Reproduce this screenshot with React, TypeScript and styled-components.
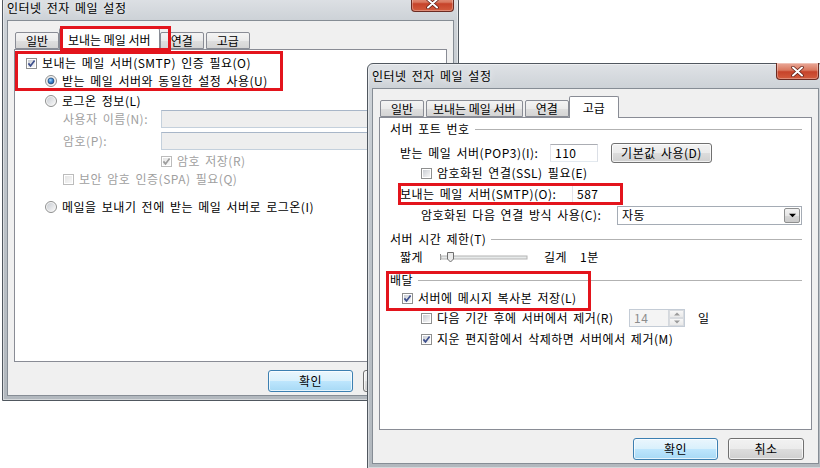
import React, { useId } from "react";
import styled, { createGlobalStyle } from "styled-components";

const GlobalStyle = createGlobalStyle`
  html, body {
    margin: 0;
    padding: 0;
    background: #ffffff;
  }
  body {
    font-family: "Noto Sans CJK KR", "Noto Sans", "Liberation Sans", sans-serif;
    font-size: 12px;
    line-height: 14px;
    letter-spacing: 0.5px;
    word-spacing: 2px;
    color: #000000;
  }
`;

const Desktop = styled.div`
  position: relative;
  width: 820px;
  height: 468px;
  overflow: hidden;
  background: #ffffff;
`;

interface FrameProps {
  $x: number;
  $y: number;
}

const Frame = styled.div<FrameProps>`
  position: absolute;
  left: ${(p) => p.$x}px;
  top: ${(p) => p.$y}px;
  width: 457px;
  height: 406px;
  box-sizing: border-box;
  display: flex;
  flex-direction: column;
  padding: 0 4px 4px;
  border: 1px solid #50575f;
  border-radius: 6px 6px 0 0;
  background: linear-gradient(180deg, #dfe2e6 0px, #cdd2d7 24px, #c0c6cc 140px, #b2b8be 100%);
  box-shadow: inset 0 0 0 1px rgba(255, 255, 255, 0.45);
`;

const TitleBar = styled.div`
  height: 24px;
  display: flex;
  align-items: flex-start;
`;

const Title = styled.span`
  margin-top: 5px;
  text-shadow: 0 0 6px rgba(255, 255, 255, 0.9);
`;

const CloseButton = styled.div`
  margin-left: auto;
  margin-top: -1px;
  width: 43px;
  height: 17px;
  box-sizing: border-box;
  display: flex;
  align-items: center;
  justify-content: center;
  border: 1px solid #6b2b22;
  border-top: none;
  border-radius: 0 0 4px 4px;
  background: linear-gradient(180deg, #eaa999 0%, #d9785f 45%, #c6432a 55%, #d35c3e 100%);
  box-shadow: inset 0 0 0 1px rgba(255, 255, 255, 0.3);
`;

const Client = styled.div`
  flex: 1;
  display: flex;
  flex-direction: column;
  padding: 0 6px;
  background: #f0f0f0;
  border: 1px solid #868d95;
`;

const TabStrip = styled.div`
  position: relative;
  z-index: 1;
  height: 28px;
  display: flex;
  align-items: flex-end;
  padding-left: 1px;
  letter-spacing: 0;
  word-spacing: 0;
`;

const Tab = styled.div<{ $active?: boolean }>`
  position: relative;
  height: ${(p) => (p.$active ? 22 : 17)}px;
  min-width: ${(p) => (p.$active ? 50 : 44)}px;
  margin: 0 ${(p) => (p.$active ? 0 : 2)}px ${(p) => (p.$active ? -1 : 0)}px
    ${(p) => (p.$active ? -2 : 0)}px;
  padding: 0 ${(p) => (p.$active ? 8 : 6)}px;
  box-sizing: border-box;
  display: flex;
  align-items: center;
  justify-content: center;
  white-space: nowrap;
  border: 1px solid #898c95;
  border-bottom: ${(p) => (p.$active ? "none" : "1px solid #898c95")};
  border-radius: 2px 2px 0 0;
  background: ${(p) =>
    p.$active
      ? "#ffffff"
      : "linear-gradient(180deg, #f4f4f4 0%, #ebebeb 50%, #dfdfdf 51%, #d4d4d4 100%)"};
`;

const Panel = styled.div`
  height: 313px;
  box-sizing: border-box;
  border: 1px solid #898c95;
  background: #ffffff;
  display: flex;
  flex-direction: column;
`;

const ButtonRow = styled.div`
  display: flex;
  justify-content: flex-end;
  gap: 10px;
  margin: 8px 8px 0 0;
`;

const PushButton = styled.div<{ $w: number; $h?: number; $primary?: boolean }>`
  width: ${(p) => p.$w}px;
  height: ${(p) => p.$h ?? 22}px;
  flex: none;
  box-sizing: border-box;
  display: flex;
  align-items: center;
  justify-content: center;
  white-space: nowrap;
  border: 1px solid ${(p) => (p.$primary ? "#3c7fb1" : "#707070")};
  border-radius: 3px;
  background: ${(p) =>
    p.$primary
      ? "linear-gradient(180deg, #eaf6fd 0%, #d9f0fc 49%, #bee6fd 50%, #a7d9f5 100%)"
      : "linear-gradient(180deg, #f2f2f2 0%, #ebebeb 49%, #dddddd 50%, #cfcfcf 100%)"};
  box-shadow: inset 0 0 0 1px rgba(255, 255, 255, 0.7);
`;

const Row = styled.div<{ $mt?: number; $indent?: number }>`
  display: flex;
  align-items: center;
  height: 18px;
  margin-top: ${(p) => p.$mt ?? 0}px;
  padding-left: ${(p) => p.$indent ?? 0}px;
  padding-right: 9px;
  white-space: nowrap;
`;

const Label = styled.span<{ $w?: number; $muted?: boolean; $ml?: number }>`
  flex: none;
  width: ${(p) => (p.$w ? `${p.$w}px` : "auto")};
  margin-left: ${(p) => p.$ml ?? 0}px;
  color: ${(p) => (p.$muted ? "#a0a0a0" : "#000000")};
`;

const GroupLine = styled.div`
  flex: 1;
  height: 0;
  margin-left: 5px;
  border-top: 1px solid #b2b2b2;
`;

const Field = styled.div<{ $w?: number; $disabled?: boolean; $ml?: number }>`
  flex: ${(p) => (p.$w ? "none" : "1")};
  width: ${(p) => (p.$w ? `${p.$w}px` : "auto")};
  margin-left: ${(p) => p.$ml ?? 0}px;
  height: 18px;
  box-sizing: border-box;
  display: flex;
  align-items: center;
  padding: 0 4px;
  border: 1px solid;
  border-color: ${(p) =>
    p.$disabled ? "#a8b6c8 #c4d0dc #c4d0dc #c4d0dc" : "#abadb3 #dbdfe6 #e3e9ef #e2e3ea"};
  background: ${(p) => (p.$disabled ? "#eeeeee" : "#ffffff")};
  color: ${(p) => (p.$disabled ? "#8c8c8c" : "#000000")};
`;

const Select = styled.div`
  flex: 1;
  height: 19px;
  box-sizing: border-box;
  display: flex;
  align-items: center;
  justify-content: space-between;
  padding: 0 1px 0 4px;
  border: 1px solid #a5acb5;
  background: #ffffff;
`;

const DropArrow = styled.div`
  width: 16px;
  height: 15px;
  box-sizing: border-box;
  display: flex;
  align-items: center;
  justify-content: center;
  border: 1px solid #8e8f8f;
  border-radius: 2px;
  background: linear-gradient(180deg, #f2f2f2 0%, #e6e6e6 50%, #d6d6d6 51%, #cacaca 100%);
`;

const Spinner = styled.div`
  width: 56px;
  height: 18px;
  box-sizing: border-box;
  display: flex;
  align-items: stretch;
  border: 1px solid #c4ccd6;
  background: #f4f4f4;
  color: #8c8c8c;
`;

const SpinText = styled.span`
  flex: 1;
  display: flex;
  align-items: center;
  padding-left: 4px;
`;

const SpinButtons = styled.div`
  width: 15px;
  display: flex;
  flex-direction: column;
  border-left: 1px solid #d4d8dd;
`;

const SpinHalf = styled.div`
  flex: 1;
  display: flex;
  align-items: center;
  justify-content: center;
  background: linear-gradient(180deg, #f7f7f7, #e9e9e9);
  border: 1px solid #d8dbdf;
`;

const Choice = styled.label<{ $w?: number; $muted?: boolean }>`
  flex: none;
  display: flex;
  align-items: center;
  gap: 5px;
  width: ${(p) => (p.$w ? `${p.$w}px` : "auto")};
  color: ${(p) => (p.$muted ? "#a0a0a0" : "#000000")};
`;

const Ring = styled.div<{ $x: number; $y: number; $w: number; $h: number }>`
  position: absolute;
  left: ${(p) => p.$x}px;
  top: ${(p) => p.$y}px;
  width: ${(p) => p.$w}px;
  height: ${(p) => p.$h}px;
  box-sizing: border-box;
  border: 3px solid #e3141c;
  pointer-events: none;
  z-index: 5;
`;

const safeId = (raw: string) => "g" + raw.replace(/[^a-zA-Z0-9]/g, "");

const CheckBox: React.FC<{ checked?: boolean; disabled?: boolean }> = ({ checked, disabled }) => {
  const id = safeId(useId());
  return (
    <svg width="11" height="11" viewBox="0 0 11 11">
      <defs>
        <linearGradient id={id} x1="0" y1="0" x2="1" y2="1">
          <stop offset="0" stopColor={disabled ? "#e4e4e4" : "#c9cdd3"} />
          <stop offset="1" stopColor={disabled ? "#f8f8f8" : "#f7f7f7"} />
        </linearGradient>
      </defs>
      <rect x="0.5" y="0.5" width="10" height="10" fill="#ffffff" stroke={disabled ? "#bcbcbc" : "#8e8f8f"} />
      <rect x="2" y="2" width="7" height="7" fill={`url(#${id})`} />
      {checked && (
        <path
          d="M2.4 5.4 L4.5 7.9 L8.6 2.6"
          fill="none"
          stroke={disabled ? "#9c9c9c" : "#3d4f8c"}
          strokeWidth="1.7"
        />
      )}
    </svg>
  );
};

const Radio: React.FC<{ selected?: boolean }> = ({ selected }) => {
  const id = safeId(useId());
  return (
    <svg width="12" height="12" viewBox="0 0 12 12">
      <defs>
        <linearGradient id={`${id}a`} x1="0" y1="0" x2="1" y2="1">
          <stop offset="0" stopColor="#c9cdd3" />
          <stop offset="1" stopColor="#f7f7f7" />
        </linearGradient>
        <radialGradient id={`${id}b`} cx="0.4" cy="0.35" r="0.7">
          <stop offset="0" stopColor="#9fd6ff" />
          <stop offset="0.5" stopColor="#3a86d0" />
          <stop offset="1" stopColor="#1c4f8a" />
        </radialGradient>
      </defs>
      <circle cx="6" cy="6" r="5.5" fill="#f5f5f5" stroke="#8e8f8f" />
      <circle cx="6" cy="6" r="4" fill={`url(#${id}a)`} />
      {selected && <circle cx="6" cy="6" r="3" fill={`url(#${id}b)`} stroke="#1b3f6e" strokeWidth="0.6" />}
    </svg>
  );
};

const CloseGlyph = () => (
  <svg width="13" height="11" viewBox="0 0 13 11">
    <path d="M2 1.5 L11 9.5 M11 1.5 L2 9.5" stroke="#5a1a12" strokeWidth="3.4" strokeLinecap="round" />
    <path d="M2 1.5 L11 9.5 M11 1.5 L2 9.5" stroke="#ffffff" strokeWidth="2" strokeLinecap="round" />
  </svg>
);

const Slider = () => (
  <svg width="88" height="14" viewBox="0 0 88 14">
    <path d="M0.5 4 V10" stroke="#8a8a8a" />
    <rect x="1" y="6" width="86" height="3" fill="#e7eaea" stroke="#b4b4b4" strokeWidth="1" />
    <path d="M7.5 2.5 H13.5 V9 L10.5 12 L7.5 9 Z" fill="#ececec" stroke="#707070" />
  </svg>
);

const DownTriangle: React.FC<{ color?: string; size?: number }> = ({ color = "#000000", size = 7 }) => (
  <svg width={size} height={Math.ceil(size / 2) + 1} viewBox="0 0 8 5">
    <path d="M0 0.5 H8 L4 4.5 Z" fill={color} />
  </svg>
);

const UpTriangle: React.FC<{ color?: string }> = ({ color = "#9a9a9a" }) => (
  <svg width="6" height="4" viewBox="0 0 8 5">
    <path d="M0 4.5 H8 L4 0.5 Z" fill={color} />
  </svg>
);

const GroupHeader: React.FC<{ text: string; mt?: number }> = ({ text, mt }) => (
  <Row $mt={mt} $indent={10}>
    <span>{text}</span>
    <GroupLine />
  </Row>
);

const tabNames = ["일반", "보내는 메일 서버", "연결", "고급"];

const Window: React.FC<{
  x: number;
  y: number;
  active: number;
  children: React.ReactNode;
  overlay?: React.ReactNode;
}> = ({ x, y, active, children, overlay }) => (
  <Frame $x={x} $y={y}>
    <TitleBar>
      <Title>인터넷 전자 메일 설정</Title>
      <CloseButton>
        <CloseGlyph />
      </CloseButton>
    </TitleBar>
    <Client>
      <TabStrip>
        {tabNames.map((name, i) => (
          <Tab key={name} $active={i === active}>
            {name}
          </Tab>
        ))}
      </TabStrip>
      <Panel>{children}</Panel>
      <ButtonRow>
        <PushButton $w={85} $primary>
          확인
        </PushButton>
        <PushButton $w={76}>취소</PushButton>
      </ButtonRow>
    </Client>
    {overlay}
  </Frame>
);

const OutgoingServerTab = () => (
  <>
    <Row $mt={4} $indent={11}>
      <Choice>
        <CheckBox checked />
        보내는 메일 서버(SMTP) 인증 필요(O)
      </Choice>
    </Row>
    <Row $indent={30}>
      <Choice>
        <Radio selected />
        받는 메일 서버와 동일한 설정 사용(U)
      </Choice>
    </Row>
    <Row $mt={2} $indent={30}>
      <Choice>
        <Radio />
        로그온 정보(L)
      </Choice>
    </Row>
    <Row $indent={48}>
      <Label $w={98} $muted>
        사용자 이름(N):
      </Label>
      <Field $disabled />
    </Row>
    <Row $mt={4} $indent={48}>
      <Label $w={98} $muted>
        암호(P):
      </Label>
      <Field $disabled />
    </Row>
    <Row $mt={2} $indent={146}>
      <Choice $muted>
        <CheckBox checked disabled />
        암호 저장(R)
      </Choice>
    </Row>
    <Row $indent={48}>
      <Choice $muted>
        <CheckBox disabled />
        보안 암호 인증(SPA) 필요(Q)
      </Choice>
    </Row>
    <Row $mt={10} $indent={30}>
      <Choice>
        <Radio />
        메일을 보내기 전에 받는 메일 서버로 로그온(I)
      </Choice>
    </Row>
  </>
);

const AdvancedTab = () => (
  <>
    <GroupHeader text="서버 포트 번호" mt={2} />
    <Row $mt={6} $indent={20}>
      <Label $w={150}>받는 메일 서버(POP3)(I):</Label>
      <Field $w={48}>110</Field>
      <PushButton $w={101} $h={20} style={{ marginLeft: 13 }}>
        기본값 사용(D)
      </PushButton>
    </Row>
    <Row $mt={2} $indent={41}>
      <Choice>
        <CheckBox />
        암호화된 연결(SSL) 필요(E)
      </Choice>
    </Row>
    <Row $mt={3} $indent={20}>
      <Label $w={172}>보내는 메일 서버(SMTP)(O):</Label>
      <Field $w={49}>587</Field>
    </Row>
    <Row $mt={3} $indent={41}>
      <Label $w={196}>암호화된 다음 연결 방식 사용(C):</Label>
      <Select>
        <span>자동</span>
        <DropArrow>
          <DownTriangle />
        </DropArrow>
      </Select>
    </Row>
    <GroupHeader text="서버 시간 제한(T)" mt={6} />
    <Row $indent={20}>
      <Label $w={40}>짧게</Label>
      <Slider />
      <Label $w={36} $ml={16}>
        길게
      </Label>
      <Label>1분</Label>
    </Row>
    <GroupHeader text="배달" mt={5} />
    <Row $mt={0} $indent={22}>
      <Choice>
        <CheckBox checked />
        서버에 메시지 복사본 저장(L)
      </Choice>
    </Row>
    <Row $mt={2} $indent={41}>
      <Choice $w={208}>
        <CheckBox />
        다음 기간 후에 서버에서 제거(R)
      </Choice>
      <Spinner>
        <SpinText>14</SpinText>
        <SpinButtons>
          <SpinHalf>
            <UpTriangle />
          </SpinHalf>
          <SpinHalf>
            <DownTriangle color="#9a9a9a" size={6} />
          </SpinHalf>
        </SpinButtons>
      </Spinner>
      <Label $ml={13}>일</Label>
    </Row>
    <Row $mt={3} $indent={41}>
      <Choice>
        <CheckBox checked />
        지운 편지함에서 삭제하면 서버에서 제거(M)
      </Choice>
    </Row>
  </>
);

const App: React.FC = () => {
  return (
    <>
      <GlobalStyle />
      <Desktop>
        <Window
          x={2}
          y={-5}
          active={1}
          overlay={
            <>
              <Ring $x={57} $y={30} $w={111} $h={25} />
              <Ring $x={12} $y={55} $w={268} $h={40} />
            </>
          }
        >
          <OutgoingServerTab />
        </Window>
        <Window
          x={367}
          y={63}
          active={3}
          overlay={
            <>
              <Ring $x={30} $y={119} $w={225} $h={22} />
              <Ring $x={18} $y={207} $w={205} $h={40} />
            </>
          }
        >
          <AdvancedTab />
        </Window>
      </Desktop>
    </>
  );
};

export default App;
